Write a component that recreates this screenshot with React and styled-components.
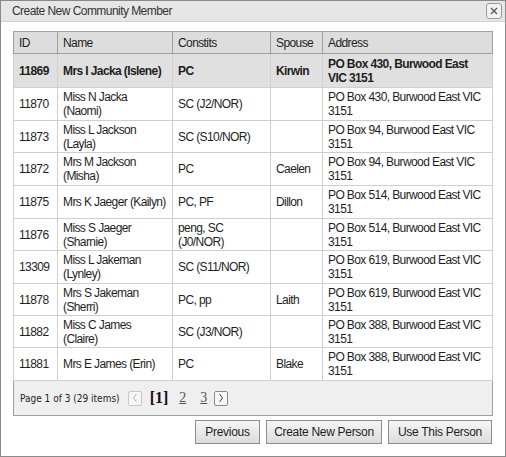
import styled, { createGlobalStyle } from "styled-components";

const GlobalStyle = createGlobalStyle`
  html, body {
    margin: 0;
    padding: 0;
    background: #ffffff;
  }
`;

const sans = `"Liberation Sans", Arial, Helvetica, sans-serif`;

const Dialog = styled.div`
  width: 506px;
  height: 457px;
  box-sizing: border-box;
  border: 1px solid #8a8a8a;
  background: #ffffff;
  display: flex;
  flex-direction: column;
  font-family: ${sans};
`;

const TitleBar = styled.div`
  height: 21px;
  box-sizing: border-box;
  background: #e6e6e6;
  border-bottom: 1px solid #d2d2d2;
  display: flex;
  align-items: center;
  justify-content: space-between;
  padding: 0 3px 0 11px;
`;

const Title = styled.div`
  font-size: 12px;
  letter-spacing: -0.55px;
  color: #333333;
`;

const CloseButton = styled.div`
  width: 14px;
  height: 14px;
  border: 1px solid #9a9a9a;
  border-radius: 3px;
  background: #f2f2f2;
  display: flex;
  align-items: center;
  justify-content: center;
`;

const Body = styled.div`
  padding: 9px 12px 0 12px;
  display: flex;
  flex-direction: column;
`;

const Table = styled.table`
  width: 479px;
  border-collapse: collapse;
  table-layout: fixed;
  font-family: ${sans};
  font-size: 12px;
  letter-spacing: -0.6px;
  color: #1e1e1e;
  border: 1px solid #a0a0a0;
`;

const HeadCell = styled.th`
  background: #dddddd;
  border: 1px solid #a0a0a0;
  font-weight: normal;
  text-align: left;
  padding: 0 5px;
  height: 21px;
  line-height: 14px;
`;

const Row = styled.tr`
  background: ${({ $selected }) => ($selected ? "#e0e0e0" : "#ffffff")};
  font-weight: ${({ $selected }) => ($selected ? "bold" : "normal")};
`;

const Cell = styled.td`
  border: 1px solid #cfcfcf;
  padding: 0 5px;
  line-height: 14px;
  vertical-align: middle;
`;

const PagerCell = styled.td`
  background: #efefef;
  border-top: 1px solid #cfcfcf;
  height: 34px;
  padding: 0 6px;
  letter-spacing: 0;
`;

const Pager = styled.div`
  display: flex;
  align-items: center;
`;

const PagerSummary = styled.span`
  font-family: "DejaVu Sans Condensed", "DejaVu Sans", sans-serif;
  font-size: 10px;
  color: #1e1e1e;
  margin-right: 8px;
`;

const ArrowBox = styled.span`
  width: 12px;
  height: 13px;
  border: 1px solid ${({ $disabled }) => ($disabled ? "#c8c8c8" : "#8a8a8a")};
  border-radius: 2px;
  background: #f7f7f7;
  display: inline-flex;
  align-items: center;
  justify-content: center;
`;

const CurrentPage = styled.span`
  font-family: "Liberation Serif", "Times New Roman", serif;
  font-weight: bold;
  font-size: 16px;
  color: #111111;
  margin: 0 4px 0 8px;
`;

const PageLink = styled.span`
  font-family: "Liberation Serif", "Times New Roman", serif;
  font-size: 14px;
  color: #555555;
  text-decoration: underline;
  margin-left: 7px;
  margin-right: 7px;
`;

const Buttons = styled.div`
  display: flex;
  justify-content: flex-end;
  gap: 6px;
  margin-top: 4px;
  padding-right: 1px;
`;

const Button = styled.div`
  height: 24px;
  box-sizing: border-box;
  padding: 0 6px;
  border: 1px solid #8c8c8c;
  background: linear-gradient(#f6f6f6, #dcdcdc);
  font-family: ${sans};
  font-size: 12px;
  letter-spacing: -0.3px;
  color: #1e1e1e;
  white-space: nowrap;
  display: flex;
  align-items: center;
  justify-content: center;
  width: ${({ $w }) => $w}px;
`;

const columns = [
  { title: "ID", width: 44 },
  { title: "Name", width: 115 },
  { title: "Constits", width: 98 },
  { title: "Spouse", width: 52 },
  { title: "Address", width: 170 },
];

const rows = [
  ["11869", "Mrs I Jacka (Islene)", "PC", "Kirwin", "PO Box 430, Burwood East VIC 3151"],
  ["11870", "Miss N Jacka (Naomi)", "SC (J2/NOR)", "", "PO Box 430, Burwood East VIC 3151"],
  ["11873", "Miss L Jackson (Layla)", "SC (S10/NOR)", "", "PO Box 94, Burwood East VIC 3151"],
  ["11872", "Mrs M Jackson (Misha)", "PC", "Caelen", "PO Box 94, Burwood East VIC 3151"],
  ["11875", "Mrs K Jaeger (Kailyn)", "PC, PF", "Dillon", "PO Box 514, Burwood East VIC 3151"],
  ["11876", "Miss S Jaeger (Sharnie)", "peng, SC (J0/NOR)", "", "PO Box 514, Burwood East VIC 3151"],
  ["13309", "Miss L Jakeman (Lynley)", "SC (S11/NOR)", "", "PO Box 619, Burwood East VIC 3151"],
  ["11878", "Mrs S Jakeman (Sherri)", "PC, pp", "Laith", "PO Box 619, Burwood East VIC 3151"],
  ["11882", "Miss C James (Claire)", "SC (J3/NOR)", "", "PO Box 388, Burwood East VIC 3151"],
  ["11881", "Mrs E James (Erin)", "PC", "Blake", "PO Box 388, Burwood East VIC 3151"],
];

// row heights as measured from the grid lines
const rowHeights = [34, 33, 32, 33, 33, 32, 33, 32, 32, 33];

function Arrow({ dir, color }) {
  const d = dir === "left" ? "M5.5 2 L2.5 6 L5.5 10" : "M2.5 2 L5.5 6 L2.5 10";
  return (
    <svg width="8" height="12" viewBox="0 0 8 12">
      <path d={d} fill="none" stroke={color} strokeWidth="1" />
    </svg>
  );
}

export default function App() {
  return (
    <>
      <GlobalStyle />
      <Dialog>
        <TitleBar>
          <Title>Create New Community Member</Title>
          <CloseButton>
            <svg width="8" height="8" viewBox="0 0 8 8">
              <path d="M1 1 L7 7 M7 1 L1 7" stroke="#555" strokeWidth="1.3" />
            </svg>
          </CloseButton>
        </TitleBar>
        <Body>
          <Table>
            <colgroup>
              {columns.map((c) => (
                <col key={c.title} style={{ width: c.width }} />
              ))}
            </colgroup>
            <thead>
              <tr>
                {columns.map((c) => (
                  <HeadCell key={c.title}>{c.title}</HeadCell>
                ))}
              </tr>
            </thead>
            <tbody>
              {rows.map((r, i) => (
                <Row key={r[0]} $selected={i === 0} style={{ height: rowHeights[i] }}>
                  {r.map((v, j) => (
                    <Cell key={j}>{v}</Cell>
                  ))}
                </Row>
              ))}
              <tr>
                <PagerCell colSpan={5}>
                  <Pager>
                    <PagerSummary>Page 1 of 3 (29 items)</PagerSummary>
                    <ArrowBox $disabled>
                      <Arrow dir="left" color="#b5b5b5" />
                    </ArrowBox>
                    <CurrentPage>[1]</CurrentPage>
                    <PageLink>2</PageLink>
                    <PageLink>3</PageLink>
                    <ArrowBox>
                      <Arrow dir="right" color="#444" />
                    </ArrowBox>
                  </Pager>
                </PagerCell>
              </tr>
            </tbody>
          </Table>
          <Buttons>
            <Button $w={65}>Previous</Button>
            <Button $w={116}>Create New Person</Button>
            <Button $w={104}>Use This Person</Button>
          </Buttons>
        </Body>
      </Dialog>
    </>
  );
}
